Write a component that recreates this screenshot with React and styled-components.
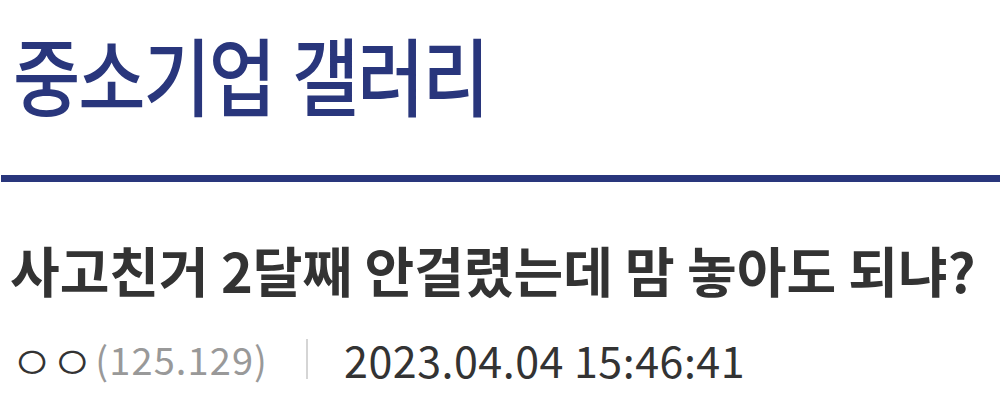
import React from "react";
import styled, { createGlobalStyle } from "styled-components";

const Global = createGlobalStyle`
  html, body { margin: 0; padding: 0; background: #fff; }
  body { font-family: "Noto Sans CJK KR", "Noto Sans", sans-serif; }
`;

const Page = styled.div`
  width: 1000px;
  height: 405px;
  overflow: hidden;
  display: flex;
  flex-direction: column;
`;

const GalleryHeader = styled.header`
  padding: 23px 0 0 12px;
  box-sizing: border-box;
  border-bottom: 7px solid #29367c;
  margin-left: 1px;
  height: 182px;
`;

const GalleryTitle = styled.h1`
  display: inline-block;
  margin: 0;
  font-size: 85px;
  font-weight: 500;
  line-height: 100px;
  color: #29367c;
  letter-spacing: -2.3px;
  word-spacing: 4px;
  white-space: nowrap;
  transform: scaleX(0.86);
  transform-origin: left center;
`;

const PostTitle = styled.h2`
  margin: 58px 0 0 10px;
  font-size: 54px;
  font-weight: 700;
  line-height: 60px;
  color: #333;
  white-space: nowrap;
`;

const Meta = styled.div`
  display: flex;
  align-items: center;
  margin: 34px 0 0 10px;
  font-size: 43px;
  line-height: 50px;
  color: #333;
  white-space: nowrap;
`;

const Nick = styled.span`
  font-size: 48px;
  font-weight: 300;
  letter-spacing: -4px;
  color: #333;
`;

const Ip = styled.span`
  font-size: 38px;
  letter-spacing: 1.1px;
  color: #999;
  margin-left: 5px;
`;

const Divider = styled.span`
  width: 2px;
  height: 40px;
  background: #d5d5d5;
  margin: 0 36px 0 38px;
`;

const DateText = styled.span`
  letter-spacing: 0.5px;
  color: #333;
`;

export default function App() {
  return (
    <Page>
      <Global />
      <GalleryHeader>
        <GalleryTitle>중소기업 갤러리</GalleryTitle>
      </GalleryHeader>
      <PostTitle>사고친거 2달째 안걸렸는데 맘 놓아도 되냐?</PostTitle>
      <Meta>
        <Nick>ㅇㅇ</Nick>
        <Ip>(125.129)</Ip>
        <Divider />
        <DateText>2023.04.04 15:46:41</DateText>
      </Meta>
    </Page>
  );
}
